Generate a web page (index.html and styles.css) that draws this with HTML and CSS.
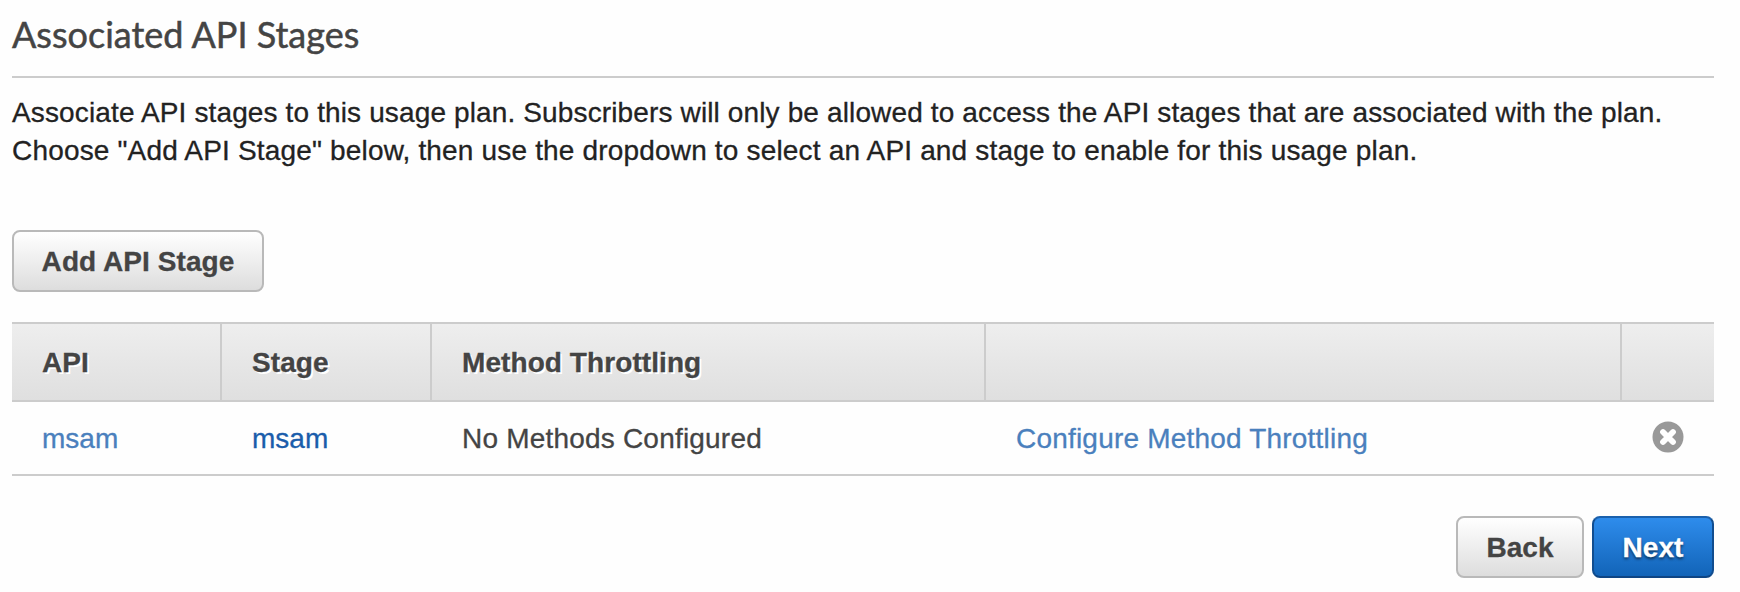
FILE: index.html
```html
<!DOCTYPE html>
<html lang="en">
<head>
<meta charset="utf-8">
<title>Associated API Stages</title>
<link rel="stylesheet" href="styles.css">
</head>
<body>
<main class="panel">
  <h1 class="title">Associated API Stages</h1>
  <p class="intro"><span class="intro-first">Associate API stages to this usage plan. Subscribers will only be allowed to access the API stages that are associated with the plan.</span><br><span class="intro-second">Choose "Add API Stage" below, then use the dropdown to select an API and stage to enable for this usage plan.</span></p>
  <button class="btn btn-add" type="button">Add API Stage</button>
  <table class="stages">
    <colgroup><col class="c-api"><col class="c-stage"><col class="c-method"><col class="c-config"><col class="c-remove"></colgroup>
    <thead>
      <tr><th>API</th><th>Stage</th><th>Method Throttling</th><th></th><th></th></tr>
    </thead>
    <tbody>
      <tr>
        <td><a class="link">msam</a></td>
        <td><a class="link link-dark">msam</a></td>
        <td class="wide">No Methods Configured</td>
        <td class="wide"><a class="link">Configure Method Throttling</a></td>
        <td class="remove"><svg class="remove-icon" viewBox="0 0 32 32" width="32" height="32"><circle cx="16" cy="16" r="15.5" fill="#999"/><path d="M11 11 21 21M21 11 11 21" stroke="#fff" stroke-width="5.8" stroke-linecap="round"/></svg></td>
      </tr>
    </tbody>
  </table>
  <div class="actions">
    <button class="btn btn-back" type="button">Back</button>
    <button class="btn btn-next" type="button">Next</button>
  </div>
</main>
</body>
</html>
```
FILE: styles.css
```css
* { box-sizing: border-box; }
body {
  margin: 0;
  background: #fefefe;
  color: #222;
  font: 28px/38px "Liberation Sans", Arial, sans-serif;
  -webkit-text-stroke: 0.3px currentColor;
}
.panel { width: 1702px; margin-left: 12px; }
.title {
  margin: 0;
  height: 78px;
  padding-top: 12px;
  border-bottom: 2px solid #ccc;
  color: #444;
  font: 400 36px/44px Lato, sans-serif;
  -webkit-text-stroke: 0.5px currentColor;
}
.intro { margin: 0; padding-top: 16px; height: 152px; white-space: nowrap; }
.intro-first { letter-spacing: 0.133px; }
.intro-second { letter-spacing: 0.172px; }
.btn {
  display: block;
  height: 62px;
  padding: 2px 0 0;
  border: 2px solid #b9b9b9;
  border-radius: 8px;
  background: linear-gradient(#fff, #ddd);
  color: #444;
  font: bold 28px/56px "Liberation Sans", Arial, sans-serif;
  letter-spacing: 0.07px;
  text-align: center;
  white-space: nowrap;
}
.btn-add { width: 252px; }
.stages {
  width: 100%;
  margin-top: 30px;
  border-collapse: separate;
  border-spacing: 0;
  table-layout: fixed;
}
.c-api, .c-stage { width: 210px; }
.c-method { width: 554px; }
.c-config { width: 636px; }
.c-remove { width: 92px; }
.stages th {
  height: 80px;
  padding: 2px 0 0 30px;
  border: solid #ccc;
  border-width: 2px 2px 2px 0;
  background: linear-gradient(#eee, #dfdfdf);
  text-align: left;
  text-shadow: 2px 2px 0 #fff;
  letter-spacing: 0.08px;
  color: #444;
}
.stages th:last-child { border-right: 0; }
.stages td {
  height: 74px;
  padding: 2px 0 0 30px;
  border-bottom: 2px solid #ccc;
  color: #444;
  white-space: nowrap;
}
.stages .wide { letter-spacing: 0.2px; }
.stages .remove { padding-top: 0; }
.link { color: #4a80bd; }
.stages .link-dark { color: #1a5dab; }
.remove-icon { display: block; margin-top: -2px; }
.actions { display: flex; justify-content: flex-end; gap: 8px; margin-top: 40px; }
.btn-back { width: 128px; }
.btn-next {
  width: 122px;
  border-color: #1b61ad #114d8f #0e4584;
  background: linear-gradient(#2e8cec, #1264b8);
  color: #fff;
  text-shadow: 0 2px 3px rgba(0, 0, 0, .6);
}
```
